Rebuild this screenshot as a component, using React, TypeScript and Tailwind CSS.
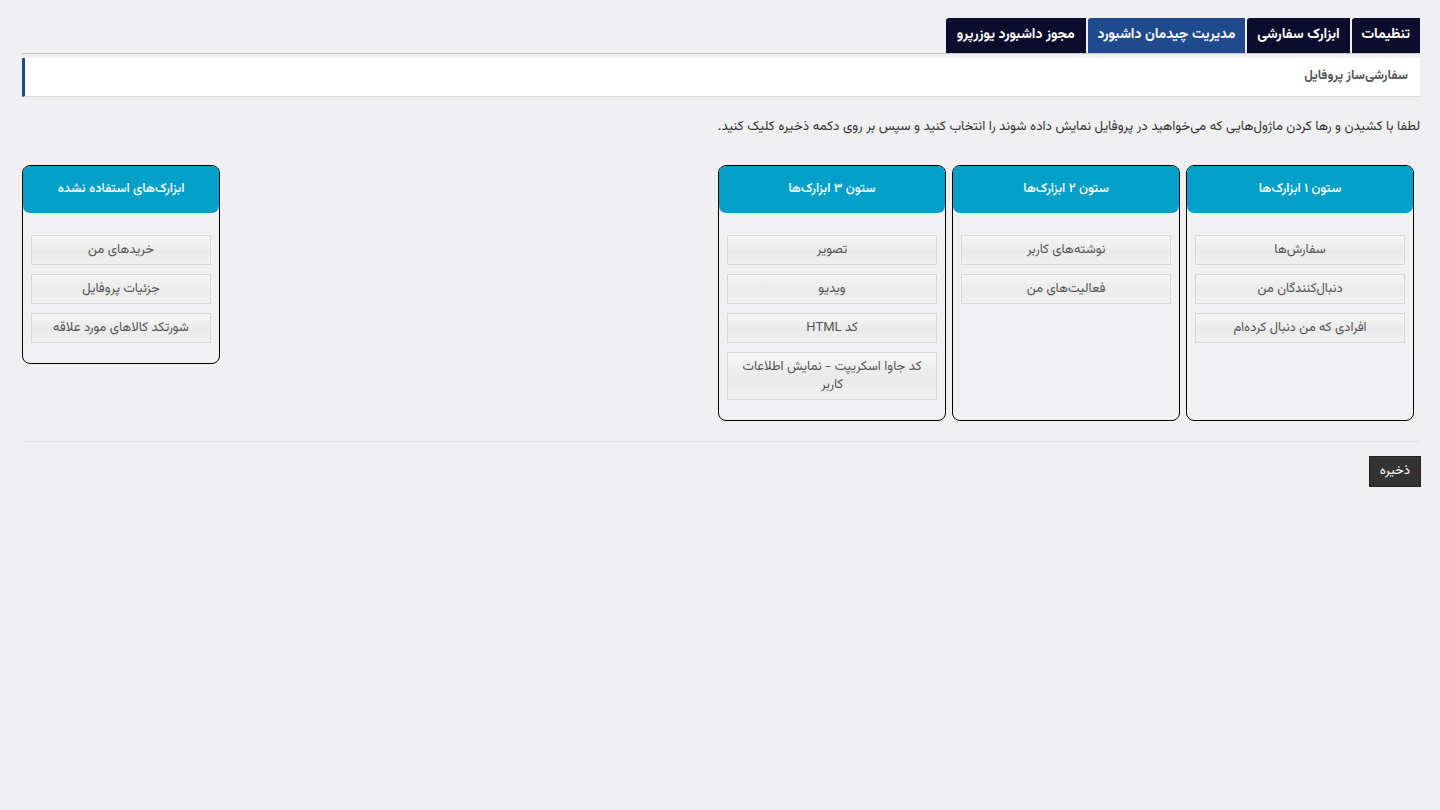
import React from "react";

const font = { fontFamily: "'Vazirmatn', 'Noto Sans Arabic', 'DejaVu Sans', sans-serif" };

function Item({ children }: { children: React.ReactNode }) {
  return (
    <div className="mx-[8px] border border-[#d9d9d9] bg-[linear-gradient(#f6f6f6,#eaeaea_55%,#f1f1f1)] px-2 py-[5px] text-center text-[13px] leading-[18px] text-[#555]">
      {children}
    </div>
  );
}

function Column({ title, items, w = "w-[228px]" }: { title: string; items: string[]; w?: string }) {
  return (
    <div className={`${w} flex flex-col rounded-[8px] border border-black bg-[#f1f1f3]`}>
      <div className="flex h-[47px] items-center justify-center rounded-[7px] bg-[#02a0c8] text-[13px] font-medium text-white">
        {title}
      </div>
      <div className="flex flex-col gap-[9px] pb-[20px] pt-[22px]">
        {items.map((t) => (
          <Item key={t}>{t}</Item>
        ))}
      </div>
    </div>
  );
}

export default function App() {
  return (
    <div dir="rtl" style={font} className="min-h-[810px] w-full bg-[#f0f0f2] pl-[22px] pr-[20px] pt-[18px]">
      <div className="flex gap-[2px] border-b border-[#c8c8c8]">
        <div className="flex h-[35px] items-center rounded-tl-[3px] bg-[#0c0c2c] px-[10px] text-[14px] font-bold text-white">تنظیمات</div>
        <div className="flex h-[35px] items-center rounded-tl-[3px] bg-[#0c0c2c] px-[10px] text-[14px] font-bold text-white">ابزارک سفارشی</div>
        <div className="flex h-[35px] items-center rounded-tl-[3px] bg-[#1f4b8e] px-[10px] text-[14px] font-bold text-white">مدیریت چیدمان داشبورد</div>
        <div className="flex h-[35px] items-center rounded-tl-[3px] bg-[#0c0c2c] px-[11px] text-[14px] font-bold text-white">مجوز داشبورد یوزرپرو</div>
      </div>
      <div className="mt-[4px] flex h-[39px] items-center border-b border-[#dcdcdc] border-l-[3px] border-l-[#1f4b8e] bg-white pr-[12px] text-[13px] font-bold text-[#555]">
        سفارشی‌ساز پروفایل
      </div>
      <p className="mt-[20px] text-[13.3px] leading-[20px] text-[#333]">
        لطفا با کشیدن و رها کردن ماژول‌هایی که می‌خواهید در پروفایل نمایش داده شوند را انتخاب کنید و سپس بر روی دکمه ذخیره کلیک کنید.
      </p>
      <div className="mt-[28px] flex items-start justify-between">
        <div className="mr-[6px] flex items-stretch gap-[6px]">
          <Column title="ستون ۱ ابزارک‌ها" items={["سفارش‌ها", "دنبال‌کنندگان من", "افرادی که من دنبال کرده‌ام"]} />
          <Column title="ستون ۲ ابزارک‌ها" items={["نوشته‌های کاربر", "فعالیت‌های من"]} />
          <Column title="ستون ۳ ابزارک‌ها" items={["تصویر", "ویدیو", "کد HTML", "کد جاوا اسکریپت - نمایش اطلاعات کاربر"]} />
        </div>
        <Column w="w-[198px]" title="ابزارک‌های استفاده نشده" items={["خریدهای من", "جزئیات پروفایل", "شورتکد کالاهای مورد علاقه"]} />
      </div>
      <div className="mt-[20px] border-t border-[#e2e2e4]" />
      <div className="mt-[15px] flex">
        <button className="h-[29px] bg-[#333] px-[10px] text-[13px] text-white shadow-[0_0_0_1px_#222]">ذخیره</button>
      </div>
    </div>
  );
}
